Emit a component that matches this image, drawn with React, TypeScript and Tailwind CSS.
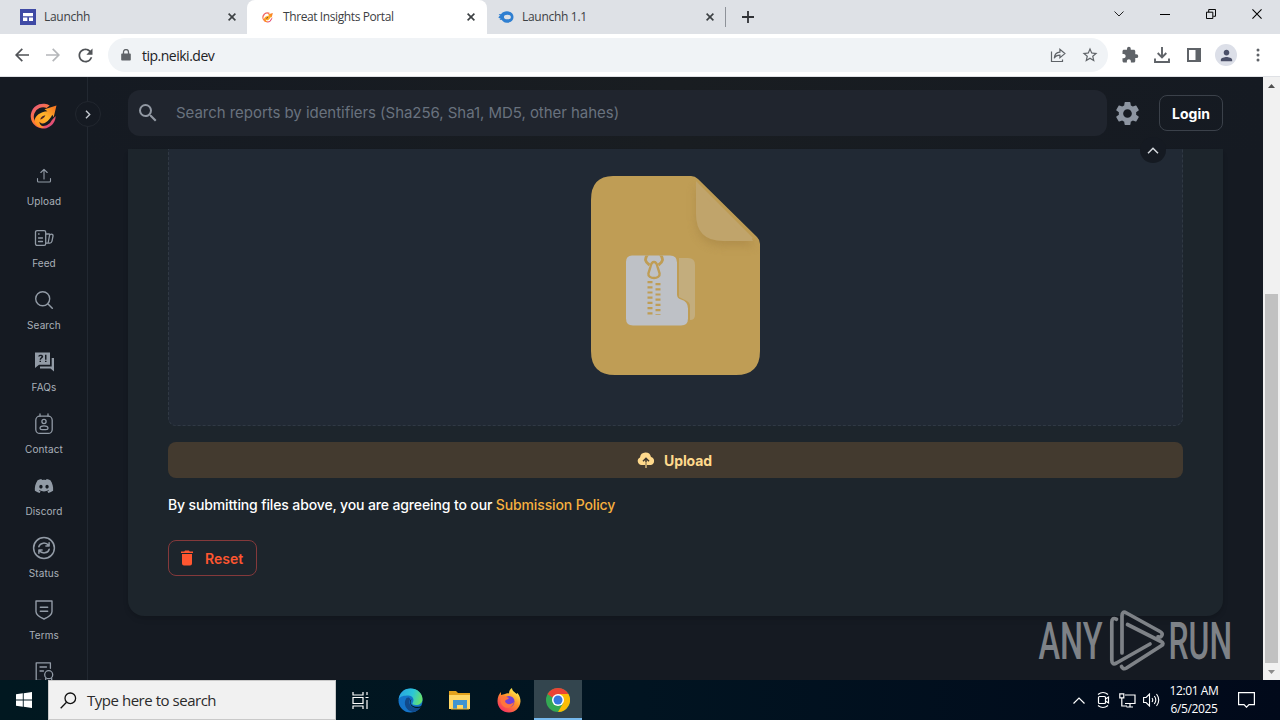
import React from 'react';
import { FaDiscord } from 'react-icons/fa';
import { MdSettings, MdExtension, MdPerson, MdSearch, MdStarOutline, MdRefresh } from 'react-icons/md';

type IconProps = { className?: string };

const CloseIcon: React.FC<IconProps> = ({ className = '' }) => (
  <svg className={`w-2 h-2 shrink-0 ${className}`} viewBox="0 0 8 8" fill="none" stroke="#3c4043" strokeWidth="1.6">
    <path d="M.6.6l6.8 6.8M7.4.6L.6 7.4" />
  </svg>
);

const FlameLogo: React.FC<{ size: number }> = ({ size }) => (
  <svg width={size} height={size} viewBox="0 0 26 26" fill="none">
    <defs>
      <linearGradient id="ring" x1="4" y1="2" x2="22" y2="24" gradientUnits="userSpaceOnUse">
        <stop stopColor="#e85a80" />
        <stop offset=".4" stopColor="#ff7a33" />
        <stop offset="1" stopColor="#d8408a" />
      </linearGradient>
      <linearGradient id="arrow" x1="5" y1="23" x2="25" y2="3" gradientUnits="userSpaceOnUse">
        <stop stopColor="#ff8a1f" />
        <stop offset=".5" stopColor="#ffb52b" />
        <stop offset="1" stopColor="#f5701f" />
      </linearGradient>
    </defs>
    <path d="M19 2.400A12 12 0 1 0 24.700 12.500L21 16.500A9 9 0 1 1 16 4.800z" fill="url(#ring)" />
    <path d="M25.500 2.300L14 6l2.800 2C10 8.600 4.800 12 4.400 17.500c.8 4.500 5 7 9.100 6-3-1.500-4.500-3.500-4.500-5.500 1.500 2 4 2.300 6 .8 3-2.100 5-4.800 6.500-7.600l1.300 2.500z" fill="url(#arrow)" />
    <path d="M9.800 15.800c.8-2.400 2.600-3.600 5-4-1 2.400-2.700 3.600-5 4z" fill="#4a2427" />
  </svg>
);

const Stroke: React.FC<{ children: React.ReactNode }> = ({ children }) => (
  <svg width="24" height="24" viewBox="0 0 24 24" fill="none" stroke="currentColor" strokeWidth="1.300" strokeLinecap="round" strokeLinejoin="round">
    {children}
  </svg>
);

const navItems = [
  {
    label: 'Upload',
    icon: <Stroke><path d="M12 15V5.500M8.800 8.500L12 5.300l3.200 3.200M5.500 14.500V17a1 1 0 0 0 1 1h11a1 1 0 0 0 1-1v-2.500" strokeWidth="1.100" /></Stroke>,
  },
  {
    label: 'Feed',
    icon: <Stroke><rect x="3.500" y="4.600" width="10.200" height="14.800" rx="1.600" /><path d="M6.500 8h.6M6.500 12h4M6.500 15.500h4M13.800 8h3.500M16.300 16l1.200-6.500c.2-.9.900-1.300 1.900-1.300 1.200 0 1.800.8 1.600 1.900l-1 5c-.3 1.200-.8 2-2.200 2h-4" /></Stroke>,
  },
  {
    label: 'Search',
    icon: <Stroke><circle cx="10.700" cy="10.700" r="7" strokeWidth="1.400" /><path d="M16 16l4.300 4.300" strokeWidth="1.500" /></Stroke>,
  },
  {
    label: 'FAQs',
    icon: (
      <svg width="24" height="24" viewBox="0 0 24 24" fill="currentColor">
        <path fillRule="evenodd" d="M3 2.500h15v12.300H7L3 18zM6.200 6.500h1.400c0-.8 2-.8 2 0 0 .9-2 1.200-2 3.200H9c0-1.300 2.200-1.500 2.200-3.200 0-2.500-5-2.500-5 0zM7.500 10.800H9v1.300H7.500zM13 4.700h1.500v5H13zM13 10.800h1.500v1.300H13z" />
        <path d="M19.700 8H22v13.500L18.500 18.400H8v-1.900h11.700z" />
      </svg>
    ),
  },
  {
    label: 'Contact',
    icon: <Stroke><rect x="3.800" y="4.200" width="16.400" height="17.200" rx="4" /><path d="M8 2v2M16 2v2" /><circle cx="12" cy="9.500" r="2.100" /><path d="M8 16.300c0-3.200 8-3.200 8 0 0 1.200-1.200 1.400-2 1.400h-4c-.8 0-2-.2-2-1.400z" /></Stroke>,
  },
  { label: 'Discord', icon: <FaDiscord size={20} /> },
  {
    label: 'Status',
    icon: <Stroke><circle cx="12" cy="12" r="10.400" strokeWidth="1.500" /><path d="M6.800 10.800C8 6.300 14 6 16.800 9.500M17.100 6.700v3.200h-3.200M17.200 13.200c-1.200 4.500-7.200 4.800-10 1.300M6.900 17.300v-3.200h3.200" strokeWidth="1.500" /></Stroke>,
  },
  {
    label: 'Terms',
    icon: <Stroke><path d="M4 3h16v10.500c0 3.700-4.500 6-8 7.500-3.500-1.500-8-3.800-8-7.500zM8.300 9.200h7.400M8.300 13.200h7.400" strokeWidth="1.400" /></Stroke>,
  },
];

const tabs = [
  {
    title: 'Launchh',
    active: false,
    icon: (
      <svg width="16" height="16" viewBox="0 0 16 16"><path d="M0 0h16v16H0z" fill="#3f4aa5" /><path d="M3 4h10v3.200H3zM3 8.500h4.300V12H3zM9 8.500h4V12H9z" fill="#fff" /></svg>
    ),
  },
  { title: 'Threat Insights Portal', active: true, icon: <FlameLogo size={11} /> },
  {
    title: 'Launchh 1.1',
    active: false,
    icon: (
      <svg width="17" height="14" viewBox="0 0 17 14"><path d="M.3 7.600C3 5 4 1 9.500 1 14 1 16.500 3.500 16.500 7s-2.500 6-7 6C6 13 4.500 11 3.800 9.300z" fill="#2f7fd1" /><ellipse cx="10" cy="7" rx="3.700" ry="2.500" fill="#dee1e6" /><path d="M1 4.500h5M2 9.500h3" stroke="#2f7fd1" /></svg>
    ),
  },
];

const TabStrip: React.FC = () => (
  <div className="flex h-[34px] shrink-0 bg-[#dee1e6] text-[#3c4043]">
    <div className="flex flex-1">
      {tabs.map((tab, i) => (
        <div
          key={tab.title}
          className={`flex h-[34px] items-center ${i === 0 ? 'w-[247px] pl-5 pr-[11px]' : i === 1 ? 'w-[240px] pl-3 pr-3' : 'w-[239px] pl-[11px] pr-3'} ${tab.active ? 'rounded-t-lg bg-white' : ''}`}
        >
          <span className="flex w-4 shrink-0 justify-center">{tab.icon}</span>
          <span className={`flex-1 whitespace-nowrap pl-2 text-[12px] ${tab.active ? 'tracking-[-0.4px]' : 'tracking-[-0.3px]'}`}>{tab.title}</span>
          <CloseIcon />
        </div>
      ))}
      <div className="flex items-center">
        <span className="-ml-px h-5 w-px bg-[#8e9299]" />
        <svg className="ml-4" width="12" height="12" viewBox="0 0 12 12" stroke="#303236" strokeWidth="1.800"><path d="M6 0v12M0 6h12" /></svg>
      </div>
    </div>
    <div className="flex h-7 items-center gap-[36px] pr-[18px]">
      <svg width="10" height="6" viewBox="0 0 10 6" fill="none" stroke="#222"><path d="M.5.5L5 5 9.500.5" /></svg>
      <span className="h-px w-[10px] bg-black" />
      <svg width="10" height="10" viewBox="0 0 11 11" fill="none" stroke="#000" strokeWidth="1.100"><path d="M.5 3.500h7v7h-7zM3 3.500v-3h7.500V8H8" /></svg>
      <svg width="10" height="10" viewBox="0 0 11 11" fill="none" stroke="#000" strokeWidth="1.200"><path d="M.5.5l10 10M10.500.5l-10 10" /></svg>
    </div>
  </div>
);

const Toolbar: React.FC = () => (
  <div className="flex h-[43px] shrink-0 items-center border-b border-[#dfe1e5] bg-white text-[#5f6368]">
    <div className="flex w-[108px] items-center gap-[17px] pl-[15px]">
      <svg width="14" height="14" viewBox="0 0 14 14" fill="none" stroke="#505357" strokeWidth="1.700"><path d="M14 7H1.500M7.300.9L1.200 7l6.100 6.100" /></svg>
      <svg width="14" height="14" viewBox="0 0 14 14" fill="none" stroke="#b5b7ba" strokeWidth="1.700"><path d="M0 7h12.500M6.700.9L12.800 7l-6.100 6.100" /></svg>
      <MdRefresh size={21} className="-ml-[2px] text-[#505357]" />
    </div>
    <div className="flex h-[34px] w-[1000px] items-center rounded-full bg-[#f0f3f6] pl-[13px] pr-[9px]">
      <svg width="10" height="12" viewBox="0 0 10 12"><path d="M1 4.500h8a.8.800 0 0 1 .8.800v5.500a.8.800 0 0 1-.8.800H1a.8.800 0 0 1-.8-.8V5.300A.8.800 0 0 1 1 4.500z" fill="currentColor" /><path d="M2.500 5V3a2.500 2.500 0 0 1 5 0v2" fill="none" stroke="currentColor" strokeWidth="1.300" /></svg>
      <span className="flex-1 pl-[11px] text-[14px] tracking-[-0.5px] text-[#202124]">tip.neiki.dev</span>
      <svg width="16" height="15" viewBox="0 0 16 15" fill="none" stroke="currentColor" strokeWidth="1.200"><path d="M1.500 3.500v10h11v-2M4.300 10.200c.3-4 2-5.700 5.600-6V1.300l5 4.300-5 4.200V7.200c-2.800 0-4.500 1-5.600 3z" /></svg>
      <MdStarOutline size={18} className="ml-[15px]" />
    </div>
    <div className="flex flex-1 items-center pl-[13px]">
      <MdExtension size={18} />
      <svg className="ml-[15px]" width="16" height="16" viewBox="0 0 16 16" fill="none" stroke="currentColor" strokeWidth="1.900"><path d="M8 0v10M3.700 6L8 10.300 12.300 6M1 11.500V15h14v-3.500" /></svg>
      <svg className="ml-[17px]" width="14" height="14" viewBox="0 0 14 14"><path fillRule="evenodd" d="M0 0h14v14H0zM2 2v10h6.500V2z" fill="currentColor" /></svg>
      <span className="ml-[14px] flex h-[22px] w-[22px] items-center justify-center rounded-full bg-[#dcdfe8]">
        <MdPerson size={17} className="text-[#4b5068]" />
      </span>
      <svg className="ml-[19px]" width="4" height="14" viewBox="0 0 4 14" fill="currentColor"><circle cx="2" cy="2" r="1.500" /><circle cx="2" cy="7" r="1.500" /><circle cx="2" cy="12" r="1.500" /></svg>
    </div>
  </div>
);

const Sidebar: React.FC = () => (
  <aside className="relative z-10 flex w-[88px] shrink-0 flex-col items-center border-r border-[#222831] bg-[#151a22] pl-px pt-[26px]">
    <div className="flex h-[27px] pr-px"><FlameLogo size={27} /></div>
    <span className="absolute left-[75px] top-6 flex h-[26px] w-[26px] items-center justify-center rounded-full border border-[#22272f] bg-[#151a22]">
      <svg width="6" height="9" viewBox="0 0 6 9" fill="none" stroke="#c5cad1" strokeWidth="1.400"><path d="M1 .8l3.700 3.700L1 8.200" /></svg>
    </span>
    <nav className="mt-[30px] flex flex-col text-[#929ba6]">
      {navItems.map((item) => (
        <div key={item.label} className="flex h-[62px] flex-col items-center pt-1">
          <span className="flex h-6 items-center">{item.icon}</span>
          <span className="mt-[6px] text-[10px] leading-[14px] tracking-[0.1px] text-[#a9b0b9]">{item.label}</span>
        </div>
      ))}
      <span className="flex justify-center pt-1">
        <Stroke><path d="M9 20.500H4.200V2.800h14.200v5.500M8 7h6.500M8 11h3.500M13.700 18.500V23l3-1.600 3 1.600v-4.500" /><circle cx="16.700" cy="14.700" r="4" /></Stroke>
      </span>
    </nav>
  </aside>
);

const ZipFile: React.FC = () => (
  <svg width="170" height="200" viewBox="0 0 170 200" fill="none">
    <defs>
      <clipPath id="folder"><path d="M30 79.500h70v70H30z" /></clipPath>
      <filter id="soft" x="-30%" y="-30%" width="160%" height="160%"><feGaussianBlur stdDeviation="4" /></filter>
      <clipPath id="sheet"><path d="M22 0h78q4 0 7 3l59 58q3 3 3 7v107q0 24-24 24H24Q0 199 0 175V24Q0 0 22 0z" /></clipPath>
    </defs>
    <path d="M22 0h78q4 0 7 3l59 58q3 3 3 7v107q0 24-24 24H24Q0 199 0 175V24Q0 0 22 0z" fill="#bf9d55" />
    <g clipPath="url(#sheet)">
      <path d="M105 10v32q0 28 28 28h32z" fill="#a98746" opacity=".65" filter="url(#soft)" />
      <path d="M105 10v28q0 27 27 27h30q-1-3-4-6L112 13q-3-3-7-3z" fill="#c0a46b" />
      <path d="M105 11V5l57 57-4 3z" fill="#c0a46b" />
    </g>
    <path d="M88 82h9q7 0 7 7v50q0 5-5 5V130q0-4-5-6l-6-3z" fill="#c3ad7d" />
    <path d="M41 79.500h38q7 0 7 7v32q0 4 4 5 7 2 7 9v10q0 7-7 7H42q-7 0-7-7V86q0-6.500 6-6.500z" fill="#bec1c6" />
    <g clipPath="url(#folder)" stroke="#bf9d55" strokeWidth="2.800">
      <path d="M57 78c-4 5-3 8 1.500 11M69 78c4 5 3 8-1.500 11" />
      <path d="M63 86c2.500 0 3 2 3.600 5l2 6.500c1 6-12.200 6-11.200 0l2-6.500c.6-3 1.100-5 3.600-5z" strokeWidth="2.400" />
      <path d="M59 105v36M67 107v32" strokeWidth="5" strokeDasharray="2.200 3" />
    </g>
  </svg>
);

const Header: React.FC = () => (
  <header className="flex h-[72px] shrink-0 items-center bg-gradient-to-r from-[#151a22] via-[#191d21] to-[#151a22] pl-10 pr-10">
    <div className="flex h-[46px] w-[979px] items-center rounded-xl bg-[#20252e] pl-2">
      <MdSearch size={24} className="text-[#9299a3]" />
      <span className="pl-4 text-[15px] tracking-[-0.04px] text-[#69727e]">Search reports by identifiers (Sha256, Sha1, MD5, other hahes)</span>
    </div>
    <MdSettings size={29} className="ml-[6px] text-[#8d95a1]" />
    <button className="ml-auto h-9 w-16 rounded-lg border border-[#3b414a] text-[14px] font-bold text-white">Login</button>
  </header>
);

const UploadCard: React.FC = () => (
  <section className="mx-10 flex h-[467px] flex-col items-start rounded-b-2xl bg-[#1d252c] px-10 shadow-md">
    <div className="flex h-[277px] w-full justify-center rounded-b-lg border border-t-0 border-dashed border-[#303944] bg-[#212934] pt-[27px]">
      <ZipFile />
    </div>
    <button className="mt-4 flex h-9 w-full items-center justify-center gap-[9px] rounded-lg bg-[#433a2f] pr-[2px] text-[14px] font-bold text-[#ffd98c]">
      <svg width="18" height="16" viewBox="0 0 18 16" fill="none">
        <path d="M4.500 13A4 4 0 0 1 3 5.400 5.600 5.600 0 0 1 14 4.900 4.200 4.200 0 0 1 14 13z" fill="#ffd98c" />
        <path d="M6 9.300l3-3 3 3M9 7v9" stroke="#433a2f" strokeWidth="1.500" />
        <path d="M9 10v6" stroke="#cbae75" strokeWidth="1.600" />
      </svg>
      <span className="tracking-[-0.1px]">Upload</span>
    </button>
    <p className="mt-[17px] h-5 whitespace-nowrap text-[14px] font-medium leading-5 tracking-[-0.13px] text-white">
      By submitting files above, you are agreeing to our <a className="text-[#f6b03f]">Submission Policy</a>
    </p>
    <button className="mt-[25px] flex h-9 w-[89px] items-center rounded-lg border border-[#84393b] pl-3 text-[14px] font-semibold text-[#ff5630]">
      <svg width="12" height="16" viewBox="0 0 12 16" fill="currentColor"><path d="M0 1.500h3.300L4 .5h4l.7 1H12V3H0zM1 4h10v9.500a2 2 0 0 1-2 2H3a2 2 0 0 1-2-2z" /></svg>
      <span className="pl-3">Reset</span>
    </button>
  </section>
);

// "ANY RUN" is set as real text, condensed to the mark's proportions
const Watermark: React.FC = () => (
  <svg className="absolute left-[1038px] top-[608px]" width="200" height="66" viewBox="0 0 200 66" fill="none" stroke="#7e8287" strokeLinejoin="round" strokeLinecap="round">
    <g fill="#7e8287" stroke="none" fontFamily="Roboto, sans-serif" fontSize="51" fontWeight="500">
      <text x="0.500" y="50.800" textLength="64" lengthAdjust="spacingAndGlyphs">ANY</text>
      <text x="130.500" y="50.800" textLength="63.500" lengthAdjust="spacingAndGlyphs">RUN</text>
    </g>
    <path d="M78.500 11.200q-4.700-2.200-4.700 3V52q0 5.500 4.700 3L112 36" strokeWidth="3.700" />
    <path d="M84 45V8q0-5.500 4.500-3L122 23.500q3.500 2 1.500 4.500-1 1.500-3.500.8" strokeWidth="3.700" />
    <path d="M89.500 16.500L123 33.500q3.800 2 .3 4.300L88.500 60q-3.500 2-5-1.500" strokeWidth="3.700" />
  </svg>
);

const Scrollbar: React.FC = () => (
  <div className="flex w-[17px] shrink-0 flex-col items-center bg-[#f1f1f1]">
    <div className="flex h-[17px] items-center"><svg width="7" height="4" viewBox="0 0 7 4"><path d="M0 4l3.500-4L7 4z" fill="#505050" /></svg></div>
    <div className="mt-[200px] h-[369px] w-[13px] bg-[#c1c1c1]" />
    <div className="flex h-[17px] items-center"><svg width="7" height="4" viewBox="0 0 7 4"><path d="M0 0l3.500 4L7 0z" fill="#8c8c8c" /></svg></div>
  </div>
);

const taskbarApps = [
  {
    name: 'taskview',
    icon: (
      <svg width="17" height="17" viewBox="0 0 17 17" fill="none" stroke="#fff" strokeWidth="1.200"><path d="M1 0v3h10V0M1 17v-3h10v3M1 5.500h10v6H1zM15 0v3M15 8v9M13.500 5.500h3" /></svg>
    ),
  },
  {
    name: 'edge',
    icon: (
      <svg width="25" height="25" viewBox="0 0 25 25">
        <defs>
          <linearGradient id="edge" x1="2" y1="6" x2="24" y2="14" gradientUnits="userSpaceOnUse"><stop stopColor="#2aa7df" /><stop offset=".5" stopColor="#2bc6d7" /><stop offset="1" stopColor="#6fe45e" /></linearGradient>
        </defs>
        <circle cx="12.500" cy="12.500" r="12" fill="#1474c9" />
        <path d="M.7 11C2 3.500 7 .5 12.500.5c7 0 12 5 12 10.500 0 4-3 6-6.500 6-3 0-4-1-3.500-2 2.500-3.500 0-7.500-4-7.500C6 7.500 2.500 8 .7 11z" fill="url(#edge)" />
        <path d="M8.500 10C4.500 15.500 8 23 15 24c3.500-.3 6.500-2.700 8-5.300-6 2.600-12.500 0-11.500-5.700.3-1.500 1-2 1-2-1-1.500-2.500-2-4-1z" fill="#114a8b" />
        <path d="M13.500 11.500c-2 2.500-1 6 3 7 3 .8 5.500.2 8-1l-.3 1.500c-5 2.500-12.700.5-12.200-5.500.2-1.400.7-2 1.500-2z" fill="#001a24" />
      </svg>
    ),
  },
  {
    name: 'explorer',
    icon: (
      <svg width="22" height="20" viewBox="0 0 22 20"><path d="M0 1h7l2 2h12v5H0z" fill="#e3a21c" /><path d="M0 5h21v14H0z" fill="#ffd766" /><path d="M4 10h14v9h-4v-4H8v4H4z" fill="#3f94d1" /><path d="M2 19h18" stroke="#f1b52d" /></svg>
    ),
  },
  {
    name: 'firefox',
    icon: (
      <svg width="24" height="25" viewBox="0 0 24 25">
        <defs>
          <linearGradient id="fox" x1="20" y1="2" x2="4" y2="23" gradientUnits="userSpaceOnUse"><stop stopColor="#fff44f" /><stop offset=".45" stopColor="#ff9028" /><stop offset="1" stopColor="#f52d65" /></linearGradient>
        </defs>
        <path d="M15 0c0 3 3 4 4.500 6l1-1C23 8 23.500 11 23.500 13.500 23 20 18 24.500 12 24.500S.5 20 .5 13C.5 9 2 6 4 4v3l4-1c1.500-1 3-1 4-.5C12 3 13 1 15 0z" fill="url(#fox)" />
        <circle cx="12" cy="13.500" r="5.500" fill="#7140d8" />
        <path d="M4 9c3-2 6 0 8 1-1 2-3 1-4 3 1 4 6 4 9 1-1 6-8 8-12 3-1.500-2.500-2-5.500-1-8z" fill="#ff743d" />
      </svg>
    ),
  },
  {
    name: 'chrome',
    icon: (
      <svg width="24" height="24" viewBox="0 0 24 24">
        <circle cx="12" cy="12" r="12" fill="#34a853" />
        <path d="M12 12L1.600 6A12 12 0 0 1 22.400 6z" fill="#ea4335" />
        <path d="M12 6h10.400A12 12 0 0 1 12 24l5.200-9z" fill="#fbbc05" />
        <path d="M12 6a6 6 0 0 0-5.500 3.500L1.600 6z" fill="#ea4335" />
        <circle cx="12" cy="12" r="6" fill="#fff" /><circle cx="12" cy="12" r="4.500" fill="#3577dd" />
      </svg>
    ),
  },
];

const Taskbar: React.FC = () => (
  <footer className="flex h-10 shrink-0 bg-gradient-to-r from-[#011820] via-[#011421] to-[#01091a] text-white">
    <div className="flex w-12 items-center justify-center">
      <svg width="16" height="16" viewBox="0 0 16 16" fill="#fff"><path d="M0 2.300l6.800-1v6.200H0zM7.700 1.200L16 0v7.500H7.700zM0 8.400h6.800v6.300L0 13.700zM7.700 8.400H16V16l-8.300-1.200z" /></svg>
    </div>
    <div className="flex w-72 items-center border border-[#c9c9c9] bg-[#f1f1f1] pl-[11px]">
      <svg width="17" height="17" viewBox="0 0 17 17" fill="none" stroke="#111" strokeWidth="1.300"><circle cx="10.300" cy="6.300" r="5.300" /><path d="M6.500 10.300L.7 16.300" /></svg>
      <span className="pl-[10px] text-[15px] tracking-[-0.47px] text-[#2b2b2b]">Type here to search</span>
    </div>
    <div className="flex flex-1">
      {taskbarApps.map((app) => (
        <div
          key={app.name}
          className={`flex items-center justify-center ${app.name === 'chrome' ? 'w-12 border-b-2 border-[#76b9ed] bg-[#33454e] pt-[2px]' : app.name === 'taskview' ? 'w-[51px] pr-[2px]' : 'w-[49px] pr-[2px]'}`}
        >
          {app.icon}
        </div>
      ))}
    </div>
    <div className="flex items-center pr-[25px]">
      <svg width="12" height="7" viewBox="0 0 12 7" fill="none" stroke="#fff" strokeWidth="1.200"><path d="M.5 6.500L6 1l5.500 5.500" /></svg>
      <svg className="ml-3" width="13" height="18" viewBox="0 0 13 18" fill="none" stroke="#fff" strokeWidth="1.200"><rect x="1.500" y="5.500" width="7" height="7" rx="1" /><path d="M8.500 8l3-2v6l-3-2M1 3.500q5-4 10 0M1 14.500q5 4 10 0" /></svg>
      <svg className="ml-[9px]" width="17" height="15" viewBox="0 0 17 15" fill="none" stroke="#fff" strokeWidth="1.200"><path d="M6 2h10v8.500H6M.8.800h4v4h-4zM2.800 5v8H8M11 10.500V14M7.500 14H14" /></svg>
      <svg className="ml-[7px]" width="17" height="14" viewBox="0 0 17 14" fill="none" stroke="#fff" strokeWidth="1.100"><path d="M.6 4.500h2.500L6.500 1v12L3.100 9.500H.6zM9 5q1.500 2 0 4M11.300 3q3 4 0 8M13.500 1q4.500 6 0 12" /></svg>
      <div className="ml-[6px] mr-px w-[56px] whitespace-nowrap text-center text-[12px] leading-[18px] tracking-[-0.4px]">
        <div>12:01 AM</div>
        <div>6/5/2025</div>
      </div>
      <svg className="ml-[15px]" width="17" height="16" viewBox="0 0 17 16" fill="none" stroke="#fff" strokeWidth="1.200"><path d="M.6.600h15.800v12H11L8.500 15.200 6 12.600H.6z" /></svg>
    </div>
  </footer>
);

export default function App() {
  return (
    <div className="relative flex h-[720px] w-[1280px] flex-col overflow-hidden bg-[#151a22] font-['Open_Sans',sans-serif]">
      <TabStrip />
      <Toolbar />
      <div className="flex h-[603px] overflow-hidden">
        <div className="flex flex-1 font-[Inter,sans-serif]">
          <Sidebar />
          <main className="relative flex flex-1 flex-col">
            <Header />
            <UploadCard />
            <span className="absolute left-[1052px] top-[60px] flex h-[26px] w-[26px] items-center justify-center rounded-full bg-[#151a22]">
              <svg width="12" height="7" viewBox="0 0 12 7" fill="none" stroke="#d5d9de" strokeWidth="1.500"><path d="M1 6.300l5-5 5 5" /></svg>
            </span>
          </main>
        </div>
        <Scrollbar />
      </div>
      <Watermark />
      <Taskbar />
    </div>
  );
}
